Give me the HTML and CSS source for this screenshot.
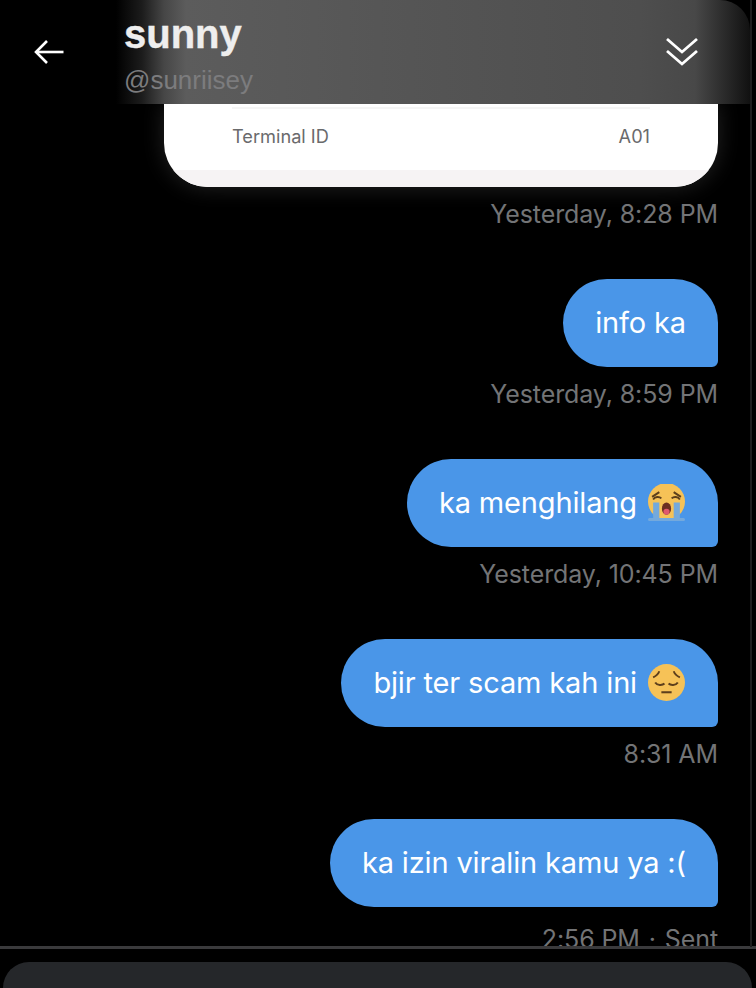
FILE: index.html
```html
<!DOCTYPE html>
<html lang="en">
<head>
<meta charset="utf-8">
<title>sunny</title>
<link rel="stylesheet" href="styles.css">
</head>
<body>
<div class="app">
  <header class="header">
    <svg class="back" width="30" height="26" viewBox="0 0 30 26" fill="none" stroke="#fff" stroke-width="2.6">
      <path d="M29.5 13H2.5"/>
      <path d="M13 2 2 13l11 11"/>
    </svg>
    <div class="who">
      <div class="name">sunny</div>
      <div class="handle">@sunriisey</div>
    </div>
    <svg class="collapse" width="34" height="30" viewBox="0 0 34 30" fill="none" stroke="#fff" stroke-width="2.8">
      <path d="M2 2 17 15 32 2"/>
      <path d="M2 14 17 27 32 14"/>
    </svg>
  </header>
  <main class="messages">
    <div class="card">
      <div class="card-rule"></div>
      <div class="card-row"><span>Terminal ID</span><span>A01</span></div>
      <div class="card-foot"></div>
    </div>
    <div class="time">Yesterday, 8:28 PM</div>

    <div class="bubble">info ka</div>
    <div class="time">Yesterday, 8:59 PM</div>

    <div class="bubble">ka menghilang
      <svg class="emoji" viewBox="0 0 36 36">
        <circle cx="18" cy="17" r="18" fill="#f6c257"/>
        <path d="M4 12.500 11 8M32 12.500 25 8" stroke="#5d3f1c" stroke-width="2" fill="none"/>
        <path d="M5 15c2-3 6-3 8-1M31 15c-2-3-6-3-8-1" stroke="#5d3f1c" stroke-width="1.800" fill="none"/>
        <path d="M5 18h6v16H5zM25 18h6v16h-6z" fill="#74a9dc"/>
        <ellipse cx="18" cy="24" rx="4.500" ry="6" fill="#6b2f22"/>
        <ellipse cx="18" cy="27" rx="3" ry="2.800" fill="#e0596d"/>
        <rect x="0" y="33" width="36" height="3" rx="1.500" fill="#74a9dc"/>
      </svg>
    </div>
    <div class="time">Yesterday, 10:45 PM</div>

    <div class="bubble">bjir ter scam kah ini
      <svg class="emoji" viewBox="0 0 36 36">
        <circle cx="18" cy="18" r="18" fill="#f6c257"/>
        <path d="M5 13c2-1 5-3 6-6M31 13c-2-1-5-3-6-6" stroke="#5d3f1c" stroke-width="1.800" fill="none"/>
        <path d="M7 18c2 3 7 3 9 1M29 18c-2 3-7 3-9 1" stroke="#5d3f1c" stroke-width="2" fill="none"/>
        <path d="M13 27.500h10" stroke="#5d3f1c" stroke-width="2" fill="none"/>
      </svg>
    </div>
    <div class="time">8:31 AM</div>

    <div class="bubble">ka izin viralin kamu ya :(</div>
    <div class="time time-last">2:56 PM <span class="dot">·</span> Sent</div>
  </main>
  <div class="composer-wrap">
    <div class="composer"></div>
  </div>
  <div class="rail"></div>
</div>
</body>
</html>
```
FILE: styles.css
```css
* { box-sizing: border-box; }
html, body { margin: 0; padding: 0; background: #000; }
body { font-family: Inter, "Liberation Sans", sans-serif; overflow: hidden; }

.app {
  position: relative;
  width: 756px;
  height: 988px;
  display: flex;
  flex-direction: column;
  overflow: hidden;
  background: #000;
}

.header {
  flex: 0 0 104px;
  width: 750px;
  display: flex;
  align-items: flex-start;
  padding: 12px 51px 0 34px;
  border-top-right-radius: 30px;
  background: linear-gradient(90deg, #000 0, #000 116px, #1c1c1c 142px, #464646 164px, #5c5c5c 186px, #565656 378px, #4e4e4e 640px, #484848 695px, #2a2a2a 725px, #111 750px);
  position: relative;
  z-index: 2;
}
.back { margin-top: 27px; flex: none; }
.who { margin-left: 60px; flex: 1; }
.name { color: #eee; font: 700 40px/44px "Liberation Sans", sans-serif; -webkit-text-stroke: 0.4px #eee; }
.handle { color: #7c7c7e; font: 400 26px/32px "Liberation Sans", sans-serif; margin-top: 8px; }
.collapse { margin-top: 25px; flex: none; }

.messages {
  flex: 0 0 845px;
  display: flex;
  flex-direction: column;
  align-items: flex-end;
  padding-right: 38px;
  overflow: hidden;
  border-bottom: 3px solid #3a3a3c;
}

.card {
  flex: none;
  width: 554px;
  height: 83px;
  background: #fff;
  border-radius: 0 0 44px 44px;
  box-shadow: 0 0 22px rgba(255, 255, 255, 0.14);
  display: flex;
  flex-direction: column;
  overflow: hidden;
}
.card-rule { height: 2px; margin: 3px 68px 0; background: #f5f5f5; flex: none; }
.card-row {
  flex: 1;
  display: flex;
  justify-content: space-between;
  align-items: center;
  padding: 0 68px 8px;
  color: #6a6a6c;
  font-size: 18.2px;
}
.card-foot { flex: 0 0 17px; background: #f6f3f4; }

.time {
  flex: none;
  margin-top: 13px;
  height: 28px;
  margin-bottom: 51px;
  color: #737476;
  font-size: 25px;
  letter-spacing: -0.1px;
  line-height: 28px;
  white-space: nowrap;
}
.time-last { margin-top: 18px; margin-bottom: 0; }
.dot { margin: 0 2px; }

.bubble {
  flex: none;
  height: 88px;
  padding: 0 32px 1px;
  display: flex;
  align-items: center;
  gap: 11px;
  border-radius: 44px 44px 6px 44px;
  background: #4a96e8;
  color: #fff;
  font-size: 29px;
  letter-spacing: -0.15px;
  white-space: nowrap;
}
.emoji { width: 37px; height: 37px; flex: none; margin-right: 1px; }

.composer-wrap { flex: 1; padding: 13px 4px 0 3px; }
.composer { height: 100%; background: #25272a; border-radius: 30px 30px 0 0; }

.rail {
  position: absolute;
  top: 0;
  bottom: 41px;
  left: 750px;
  width: 2px;
  background: #1e1e1e;
  z-index: 3;
}
```
